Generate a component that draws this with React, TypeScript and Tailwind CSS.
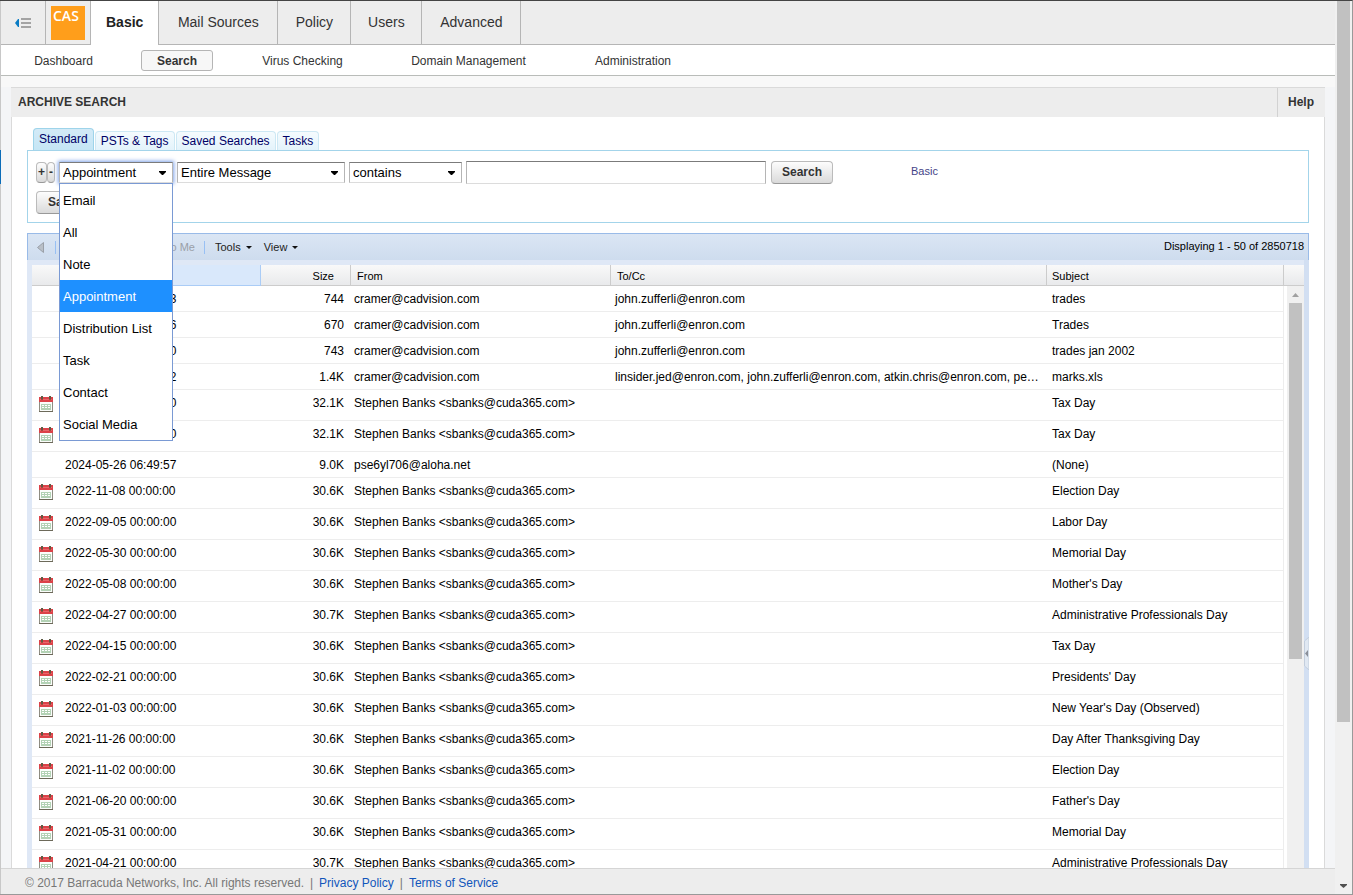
import React from "react";
import clsx from "clsx";

type Row = { date: string; size: string; from: string; to?: string; subject: string; event?: boolean };

const banks = "Stephen Banks <sbanks@cuda365.com>";
const holiday = (date: string, size: string, subject: string): Row => ({
  date: date + " 00:00:00",
  size,
  from: banks,
  subject,
  event: true,
});

const rows: Row[] = [
  { date: "2026-12-16 06:44:03", size: "744", from: "cramer@cadvision.com", to: "john.zufferli@enron.com", subject: "trades" },
  { date: "2026-12-16 06:43:56", size: "670", from: "cramer@cadvision.com", to: "john.zufferli@enron.com", subject: "Trades" },
  { date: "2026-12-15 06:40:20", size: "743", from: "cramer@cadvision.com", to: "john.zufferli@enron.com", subject: "trades jan 2002" },
  {
    date: "2026-12-15 06:38:12",
    size: "1.4K",
    from: "cramer@cadvision.com",
    to: "linsider.jed@enron.com, john.zufferli@enron.com, atkin.chris@enron.com, pete.cramer@enron.com",
    subject: "marks.xls",
  },
  holiday("2025-04-15", "32.1K", "Tax Day"),
  holiday("2024-04-15", "32.1K", "Tax Day"),
  { date: "2024-05-26 06:49:57", size: "9.0K", from: "pse6yl706@aloha.net", subject: "(None)" },
  holiday("2022-11-08", "30.6K", "Election Day"),
  holiday("2022-09-05", "30.6K", "Labor Day"),
  holiday("2022-05-30", "30.6K", "Memorial Day"),
  holiday("2022-05-08", "30.6K", "Mother's Day"),
  holiday("2022-04-27", "30.7K", "Administrative Professionals Day"),
  holiday("2022-04-15", "30.6K", "Tax Day"),
  holiday("2022-02-21", "30.6K", "Presidents' Day"),
  holiday("2022-01-03", "30.6K", "New Year's Day (Observed)"),
  holiday("2021-11-26", "30.6K", "Day After Thanksgiving Day"),
  holiday("2021-11-02", "30.6K", "Election Day"),
  holiday("2021-06-20", "30.6K", "Father's Day"),
  holiday("2021-05-31", "30.6K", "Memorial Day"),
  holiday("2021-04-21", "30.7K", "Administrative Professionals Day"),
];

const kinds = ["Email", "All", "Note", "Appointment", "Distribution List", "Task", "Contact", "Social Media"];

function CollapseIcon() {
  return (
    <svg width="16" height="10" viewBox="0 0 16 10" aria-hidden="true">
      <path d="M4 1v8H3L0 5l3-4z" fill="#0a7cc4" />
      <path d="M6 0h10v2H6zM6 4h10v2H6zM6 8h10v2H6z" fill="#a3a3a3" />
    </svg>
  );
}

function CalendarIcon() {
  return (
    <svg className="block" width="14" height="17" viewBox="0 0 14 17" aria-hidden="true">
      <rect x="0" y="1" width="14" height="5" fill="#dc4248" />
      <rect x="1" y="3" width="12" height="1" fill="#e8666b" />
      <rect x="0" y="6" width="14" height="10" fill="#8f8d82" />
      <rect x="1" y="6" width="12" height="9" fill="#fbfdfb" />
      <rect x="0" y="15" width="14" height="1" fill="#6d6a5a" />
      <rect x="2" y="8" width="10" height="6" fill="#b3d2b5" />
      <path d="M3 9h2v1H3zM6 9h2v1H6zM9 9h2v1H9zM3 11h2v1H3zM6 11h2v1H6zM9 11h2v1H9z" fill="#fff" />
      <path d="M2 0h2v3H2zM10 0h2v3h-2z" fill="#5f5b45" />
      <path d="M2 3h2v1H2zM10 3h2v1h-2z" fill="#a34a3c" />
    </svg>
  );
}

function Caret({ className }: { className?: string }) {
  return (
    <svg className={className} width="7" height="4" viewBox="0 0 7 4" aria-hidden="true">
      <path d="M0 0h7v1L4 4H3L0 1z" fill="#000" />
    </svg>
  );
}

function SmallCaret() {
  return (
    <svg width="6" height="3" viewBox="0 0 6 3" aria-hidden="true">
      <path d="M0 0h6L3 3z" fill="#111" />
    </svg>
  );
}

function Picker({ label, value, options, className }: { label: string; value: string; options: string[]; className: string }) {
  return (
    <div className={clsx("relative h-[21px]", className)}>
      <select
        aria-label={label}
        defaultValue={value}
        className="block h-full w-full appearance-none border border-[#b5b5b5] border-t-[#7b7b7b] border-b-[#dcdcdc] bg-white pl-[3px] text-[13px] leading-[19px] text-black outline-none"
      >
        {options.map((o) => (
          <option key={o}>{o}</option>
        ))}
      </select>
      <Caret className="pointer-events-none absolute top-[9px] right-[7px]" />
    </div>
  );
}

function TopTab({ children, className }: { children: string; className: string }) {
  return (
    <a
      href="#"
      className={clsx("flex items-center justify-center border-r border-[#b5b5b5] pb-[2px] text-sm text-[#333]", className)}
    >
      {children}
    </a>
  );
}

function SubLink({ children, className }: { children: string; className: string }) {
  return (
    <a href="#" className={clsx("pt-px text-center", className)}>
      {children}
    </a>
  );
}

const glossy =
  "border border-[#bbb] border-b-[#999] bg-linear-to-b from-[#fdfdfd] to-[#dadada] text-xs font-bold text-[#333] rounded";

function SearchTab({ children, active }: { children: string; active?: boolean }) {
  return (
    <a
      href="#"
      className={clsx(
        "rounded-t border border-b-0 px-[5px] text-xs text-[#006]",
        active
          ? "h-[22px] border-[#9ed4ea] bg-linear-to-b from-[#d3eaf7] to-[#c5e6f5] leading-[21px]"
          : "h-[19px] border-[#cde8f4] bg-linear-to-b from-[#f5fbfe] to-[#e3f3fb] leading-[18px]",
      )}
    >
      {children}
    </a>
  );
}

const headCell = "h-[21px] border-r border-b border-[#ccc] pt-[2px] font-normal";

export default function App() {
  return (
    <div className="flex h-screen flex-col overflow-hidden border-t border-r border-b border-t-[#444] border-r-[#999] border-b-[#999] bg-[#f4f5f7] font-['Liberation_Sans',Arial,sans-serif] text-xs text-black">
      <div className="flex min-h-0 flex-1">
        <div className="w-px shrink-0 bg-[#c8c8c8] pt-[149px]">
          <div className="h-[34px] bg-[#0b6cb8]" />
        </div>

        <div className="flex min-w-0 flex-1 flex-col">
          <nav className="flex h-11 shrink-0 border-b border-[#b5b5b5] bg-[#ededed]">
            <button aria-label="Collapse menu" className="flex w-[45px] items-center justify-center border-r border-[#b5b5b5]">
              <CollapseIcon />
            </button>
            <div className="flex w-[45px] items-center justify-center border-r border-[#b5b5b5]">
              <div className="h-[34px] w-[34px] bg-[#ff9e1b] pl-[2px] font-['Open_Sans',sans-serif] text-sm leading-[20px] font-semibold text-white">
                CAS
              </div>
            </div>
            <a href="#" className="-mb-px flex items-center border-r border-[#b5b5b5] bg-white px-[15px] pb-[3px] text-sm font-bold text-[#222]">
              Basic
            </a>
            <TopTab className="w-[119px]">Mail Sources</TopTab>
            <TopTab className="w-[73px]">Policy</TopTab>
            <TopTab className="w-[71px]">Users</TopTab>
            <TopTab className="w-[99px]">Advanced</TopTab>
          </nav>

          <nav className="flex h-[31px] shrink-0 items-center gap-8 border-b border-[#b9bcb9] bg-white pl-[17px] text-[#333]">
            <SubLink className="w-[91px]">Dashboard</SubLink>
            <a href="#" className="h-[21px] w-[72px] rounded-[3px] border border-[#b5b5b5] bg-[#f7f7f7] text-center leading-[20px] font-bold">
              Search
            </a>
            <SubLink className="w-[115px]">Virus Checking</SubLink>
            <SubLink className="w-[153px]">Domain Management</SubLink>
            <SubLink className="w-[112px]">Administration</SubLink>
          </nav>

          <div className="h-[11px] shrink-0 bg-[#f8f8f8]" />

          <main className="mr-[10px] ml-[10px] flex min-h-0 flex-1 flex-col">
            <header className="flex h-[30px] shrink-0 border-t border-[#dadada] bg-[#ededed] font-bold text-[#333]">
              <h1 className="flex-1 pl-[7px] leading-[29px]">ARCHIVE SEARCH</h1>
              <a href="#" className="border-l border-[#d2d2d2] pr-[11px] pl-[10px] leading-[29px]">Help</a>
            </header>

            <section className="flex min-h-0 flex-1 flex-col border-x border-[#dadada] bg-white px-[15px] pt-[11px]">
              <div className="flex items-end gap-px pl-[6px]">
                <SearchTab active>Standard</SearchTab>
                <SearchTab>PSTs &amp; Tags</SearchTab>
                <SearchTab>Saved Searches</SearchTab>
                <SearchTab>Tasks</SearchTab>
              </div>

              <form className="h-[73px] shrink-0 border border-[#a3d4ea] px-2 pt-[10px]" onSubmit={(e) => e.preventDefault()}>
                <div className="flex h-[23px] items-center">
                  <button type="button" className={clsx(glossy, "h-[21px] w-[11px] leading-[17px]")}>+</button>
                  <button type="button" className={clsx(glossy, "mr-1 h-[21px] w-2 leading-[17px]")}>-</button>

                  <div className="relative mr-1 w-[114px]">
                    <div className="shadow-[0_0_4px_1px_#7da2e8]">
                      <Picker label="Item type" value="Appointment" options={kinds} className="w-full" />
                    </div>
                    <ul role="listbox" aria-label="Item type" className="absolute top-[21px] left-0 z-10 w-full border border-[#7a9ad4] bg-white text-[13px] leading-[34px]">
                      {kinds.map((k) => (
                        <li
                          key={k}
                          role="option"
                          aria-selected={k === "Appointment"}
                          className={clsx("h-8 pl-[3px]", k === "Appointment" && "bg-[#1e90ff] text-white")}
                        >
                          {k}
                        </li>
                      ))}
                    </ul>
                  </div>

                  <Picker label="Field" value="Entire Message" options={["Entire Message"]} className="mr-1 w-[168px]" />
                  <Picker label="Condition" value="contains" options={["contains"]} className="mr-1 w-[113px]" />
                  <input
                    aria-label="Search text"
                    className="mr-[5px] h-[23px] w-[300px] border border-[#b5b5b5] border-t-[#7b7b7b] border-b-[#dcdcdc] bg-white px-1 outline-none"
                  />
                  <button type="submit" className={clsx(glossy, "h-[23px] w-[62px] pb-[2px]")}>Search</button>
                  <a href="#" className="ml-[78px] pb-[2px] text-[11px] text-[#448]">Basic</a>
                </div>
                <button type="button" className={clsx(glossy, "mt-[7px] block h-[23px] px-[11px] pb-[2px]")}>Save</button>
              </form>

              <div className="mt-[10px] flex h-[27px] shrink-0 items-center border border-b-0 border-[#99bbe8] bg-linear-to-b from-[#dbe6f4] to-[#cedcee] text-[11px] text-[#222]">
                <button aria-label="Previous page" className="ml-[9px]">
                  <svg width="7" height="11" viewBox="0 0 7 11" aria-hidden="true">
                    <path d="M6.500 .5v10L.5 5.500z" fill="#b9bfc7" stroke="#9aa0a8" />
                  </svg>
                </button>
                <div className="ml-[11px] h-[13px] w-px bg-[#98c0f4]" />
                <button disabled className="w-[139px] text-right text-[#9a9fa8]">Send to Me</button>
                <div className="ml-[9px] h-[13px] w-px bg-[#98c0f4]" />
                <button className="ml-[10px] flex items-center gap-[5px]">
                  Tools <SmallCaret />
                </button>
                <button className="ml-3 flex items-center gap-[5px]">
                  View <SmallCaret />
                </button>
                <div className="ml-auto pr-1 pb-[2px] text-black">Displaying 1 - 50 of 2850718</div>
              </div>

              <div className="flex min-h-0 flex-1 border-l-[5px] border-[#dfe8f6]">
                <div className="flex min-w-0 flex-1 flex-col border-t-[5px] border-[#dfe8f6]">
                  <div className="flex min-h-0 flex-1">
                    <div className="min-w-0 flex-1 overflow-hidden">
                      <table className="w-full table-fixed border-separate border-spacing-0">
                        <colgroup>
                          <col className="w-7" />
                          <col className="w-[201px]" />
                          <col className="w-[90px]" />
                          <col className="w-[260px]" />
                          <col className="w-[436px]" />
                          <col />
                        </colgroup>
                        <thead className="bg-linear-to-b from-[#f9f9f9] to-[#e8e9eb] text-left text-[11px]">
                          <tr>
                            <th className="border-b border-[#ccc]" />
                            <th className="h-[21px] border-r border-b border-[#aaccf6] bg-[#d9e8fb] pt-[2px] pl-[6px] font-normal">Date</th>
                            <th className={clsx(headCell, "pr-4 text-right")}>Size</th>
                            <th className={clsx(headCell, "pl-[6px]")}>From</th>
                            <th className={clsx(headCell, "pl-[6px]")}>To/Cc</th>
                            <th className={clsx(headCell, "pl-[5px]")}>Subject</th>
                          </tr>
                        </thead>
                        <tbody className="[&_td]:truncate [&_td]:border-b [&_td]:border-[#ededed] [&_td]:pt-[6px] [&_td]:align-top [&_td]:leading-[15px]">
                          {rows.map((r, i) => (
                            <tr key={i} className={r.event ? "h-[31px]" : "h-[26px]"}>
                              <td className="pl-[7px]">{r.event && <CalendarIcon />}</td>
                              <td className="pl-[5px]">{r.date}</td>
                              <td className="pr-[7px] text-right">{r.size}</td>
                              <td className="pl-[3px]">{r.from}</td>
                              <td className="pr-[5px] pl-1">{r.to}</td>
                              <td className="border-r pl-[5px]">{r.subject}</td>
                            </tr>
                          ))}
                        </tbody>
                      </table>
                    </div>
                    <div className="flex w-5 shrink-0 flex-col">
                      <div className="h-[21px] shrink-0 border-b border-[#ccc] bg-linear-to-b from-[#f9f9f9] to-[#e8e9eb]" />
                      <div className="ml-[3px] flex flex-1 flex-col items-center bg-[#f0f0f0] pt-[7px]">
                        <svg width="7" height="4" viewBox="0 0 7 4" aria-hidden="true">
                          <path d="M0 4h7L3.500 0z" fill="#a0a0a0" />
                        </svg>
                        <div className="mt-[6px] h-[356px] w-[13px] bg-[#c1c1c1]" />
                      </div>
                    </div>
                  </div>
                </div>
                <div className="flex w-[5px] shrink-0 flex-col bg-[#d2dff2] pt-[377px]">
                  <svg width="5" height="33" viewBox="0 0 5 33" aria-hidden="true">
                    <path d="M5 0L.5 4v25l4.500 4z" fill="#e0e8f2" stroke="#c3cedd" />
                    <path d="M4 13v7L1 16.500z" fill="#8a8f99" />
                  </svg>
                </div>
              </div>
            </section>
          </main>

          <footer className="flex h-[26px] shrink-0 items-center gap-[6px] border-t border-[#d5d5d5] bg-[#ededed] pl-6 pt-[2px] text-[#777]">
            <span>© 2017 Barracuda Networks, Inc. All rights reserved.</span>
            <span>|</span>
            <a href="#" className="text-[#15b]">Privacy Policy</a>
            <span>|</span>
            <a href="#" className="text-[#15b]">Terms of Service</a>
          </footer>
        </div>

        <div className="flex w-[17px] shrink-0 flex-col items-center justify-between bg-[#f0f0f0]">
          <div className="h-[721px] w-[13px] bg-[#c1c1c1]" />
          <svg className="mb-[6px]" width="7" height="4" viewBox="0 0 7 4" aria-hidden="true">
            <path d="M0 0h7v1L3.500 4 0 1z" fill="#505050" />
          </svg>
        </div>
      </div>
    </div>
  );
}
